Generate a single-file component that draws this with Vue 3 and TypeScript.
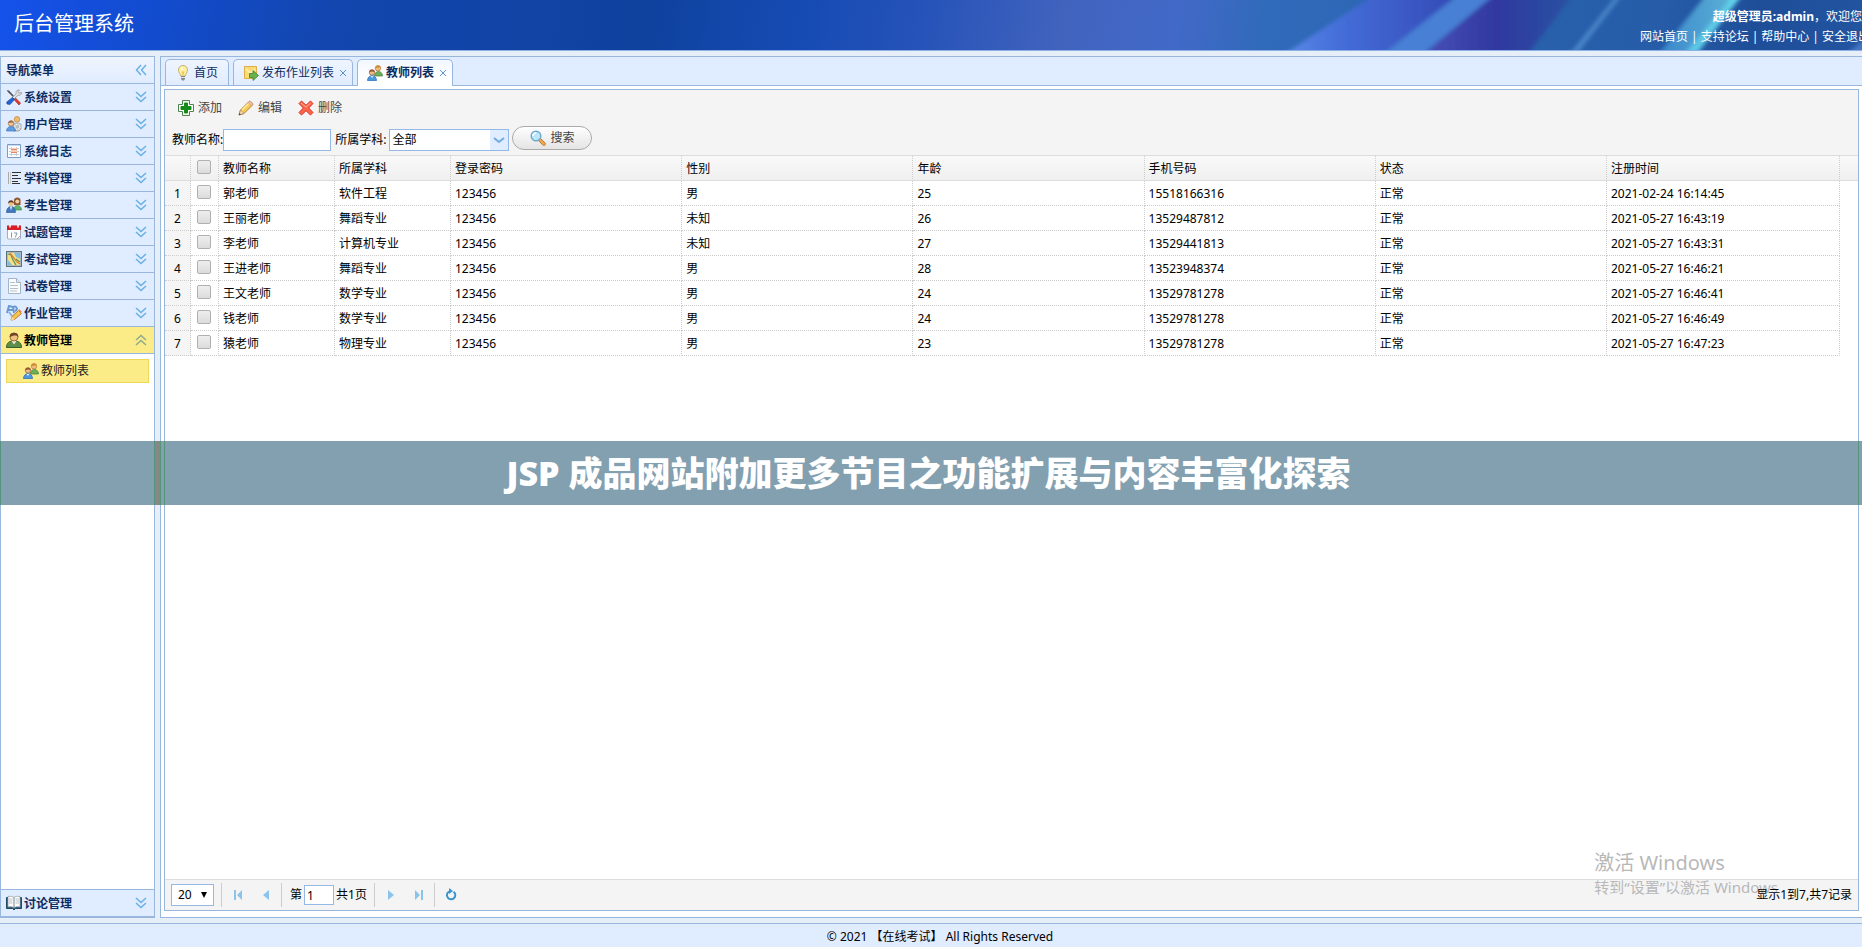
<script setup lang="ts">
import { ref } from 'vue'

interface NavItem { label: string; icon: string }
interface Teacher { name: string; subject: string; password: string; gender: string; age: number; phone: string; status: string; created: string }

const navItems: NavItem[] = [
  { label: '系统设置', icon: 'tools' },
  { label: '用户管理', icon: 'users-gear' },
  { label: '系统日志', icon: 'log' },
  { label: '学科管理', icon: 'lines' },
  { label: '考生管理', icon: 'students' },
  { label: '试题管理', icon: 'calendar' },
  { label: '考试管理', icon: 'exam' },
  { label: '试卷管理', icon: 'paper' },
  { label: '作业管理', icon: 'homework' },
]

const headerLinks = ['网站首页', '支持论坛', '帮助中心', '安全退出']
const columns = ['教师名称', '所属学科', '登录密码', '性别', '年龄', '手机号码', '状态', '注册时间']

const teachers: Teacher[] = [
  { name: '郭老师', subject: '软件工程', password: '123456', gender: '男', age: 25, phone: '15518166316', status: '正常', created: '2021-02-24 16:14:45' },
  { name: '王丽老师', subject: '舞蹈专业', password: '123456', gender: '未知', age: 26, phone: '13529487812', status: '正常', created: '2021-05-27 16:43:19' },
  { name: '李老师', subject: '计算机专业', password: '123456', gender: '未知', age: 27, phone: '13529441813', status: '正常', created: '2021-05-27 16:43:31' },
  { name: '王进老师', subject: '舞蹈专业', password: '123456', gender: '男', age: 28, phone: '13523948374', status: '正常', created: '2021-05-27 16:46:21' },
  { name: '王文老师', subject: '数学专业', password: '123456', gender: '男', age: 24, phone: '13529781278', status: '正常', created: '2021-05-27 16:46:41' },
  { name: '钱老师', subject: '数学专业', password: '123456', gender: '男', age: 24, phone: '13529781278', status: '正常', created: '2021-05-27 16:46:49' },
  { name: '猿老师', subject: '物理专业', password: '123456', gender: '男', age: 23, phone: '13529781278', status: '正常', created: '2021-05-27 16:47:23' },
]

const nameFilter = ref('')
const subjectFilter = ref('全部')
const pageSize = ref('20')
const pageNumber = ref('1')
const selected = ref<number[]>([])

function toggleAll(event: Event) {
  selected.value = (event.target as HTMLInputElement).checked ? teachers.map((_, i) => i) : []
}
</script>

<template>
  <div class="page">
    <svg class="sprite" aria-hidden="true">
      <symbol id="down" viewBox="0 0 16 16"><path d="M3 3l5 4.500 5-4.500M3 8l5 4.500L13 8" fill="none" stroke="#69b0e4" stroke-width="1.500" /></symbol>
      <symbol id="up" viewBox="0 0 16 16"><path d="M3 8l5-4.500L13 8M3 13l5-4.500 5 4.500" fill="none" stroke="#8fa98c" stroke-width="1.500" /></symbol>
      <symbol id="left" viewBox="0 0 16 16"><path d="M8 3L3.500 8 8 13M13 3L8.500 8l4.500 5" fill="none" stroke="#69b0e4" stroke-width="1.500" /></symbol>
      <symbol id="tools" viewBox="0 0 16 16">
        <path d="M1 1l2 .6 6 6.400-1 1L1.600 2.800z" fill="#555" />
        <path d="M9 8.500l5.500 5.500-1.500 2L7.500 10z" fill="#e03b2e" stroke="#9a1f18" stroke-width=".6" />
        <path d="M10 3.500C10 1.500 12 .5 13.500 1L12 2.700l1 1.400 2.500-.6c0 2.300-1.800 3.200-3.500 2.700L8 10 6.300 8.300l4-3.600z" fill="#e3e3e3" stroke="#8a8a8a" stroke-width=".7" />
        <path d="M6.500 8.500l2 2L4 15.500 1 15l-.3-2z" fill="#2463d8" stroke="#153f94" stroke-width=".6" />
      </symbol>
      <symbol id="users-gear" viewBox="0 0 16 16">
        <circle cx="11" cy="3.300" r="2.800" fill="#eebc68" stroke="#b6792b" stroke-width=".6" />
        <path d="M7 15V8.500C8 6.500 14 6.500 15 8.500V13l-2 2z" fill="#b8bec0" stroke="#82898c" stroke-width=".6" />
        <circle cx="11.500" cy="10.800" r="2.600" fill="none" stroke="#eef0f1" stroke-width="1.600" stroke-dasharray="1.300 .7" />
        <circle cx="5" cy="7.500" r="2.700" fill="#f1c59a" stroke="#9b5e31" stroke-width=".6" /><path d="M2.300 7C2 4 8 3.500 7.700 7 6 5.700 4 7 2.300 7z" fill="#a46b37" />
        <path d="M.5 15c0-6 9-6 9 0z" fill="#5f9fdf" stroke="#2f6ab2" stroke-width=".6" />
      </symbol>
      <symbol id="log" viewBox="0 0 16 16">
        <path d="M1.500 1.500h13v13h-13z" fill="#fff" stroke="#7e9cc2" />
        <path d="M2 2.500h12" stroke="#c9dbf2" /><path d="M3 5.500h10M3 8.500h10M3 11.500h10M5.500 4v9M10.500 4v9" stroke="#c3d0da" />
        <path d="M5 5h6v5H5z" fill="#f6cdb6" /><path d="M5 6.500h6M5 9.500h6" stroke="#e58a6c" />
      </symbol>
      <symbol id="lines" viewBox="0 0 16 16"><path d="M2.500 2v12" stroke="#aaa" /><path d="M4.500 2v12" stroke="#ccc" /><path d="M6 2.500h9M6 5.500h6M6 8.500h9M6 11.500h6M6 13.500h8" stroke="#333" /></symbol>
      <symbol id="students" viewBox="0 0 16 16">
        <path d="M8 8V3c0-3.500 6.500-3.500 6.500 0v5z" fill="#8b542b" /><circle cx="11.300" cy="4.500" r="2" fill="#f5caa0" />
        <path d="M7.500 13c0-6 8-6 8 0z" fill="#63b46c" stroke="#36803e" stroke-width=".6" />
        <circle cx="5" cy="6.500" r="2.600" fill="#eec190" /><path d="M2 6.500C2 2 8 2 8 6.500 6 4.700 4 4.700 2 6.500z" fill="#5a3b27" />
        <path d="M.5 15.500c0-8 9-8 9 0z" fill="#3e78bf" stroke="#24538e" stroke-width=".6" /><path d="M4 9.500h2l-1 4z" fill="#fff" />
      </symbol>
      <symbol id="calendar" viewBox="0 0 16 16">
        <rect x="1.500" y="2" width="13" height="13" rx="1" fill="#fff" stroke="#a5adba" /><path d="M1 1.500h14V6H1z" fill="#d91d27" />
        <path d="M4 .5v3M12 .5v3" stroke="#fff" stroke-width="1.500" /><path d="M5.500 8.500v5M8 9h3l-1.700 4.500" fill="none" stroke="#8a96a6" />
        <path d="M11 15l3.500-3.500" stroke="#a5adba" />
      </symbol>
      <symbol id="exam" viewBox="0 0 16 16">
        <rect x=".5" y=".5" width="15" height="15" fill="#a9bbc2" stroke="#60727c" /><rect x="2" y="2" width="12" height="12" fill="#f7df84" />
        <path d="M8 2h6v6L10 6zM2 9l4 5H2z" fill="#82bce2" /><path d="M2 3l3 1 2 5 3 5M14 11l-4-3" fill="none" stroke="#57945b" stroke-width="1.200" />
        <path d="M4 2l7 9 3 2" fill="none" stroke="#d88330" stroke-width="1.300" />
      </symbol>
      <symbol id="paper" viewBox="0 0 16 16"><path d="M2.500.5h8l4 4v11h-12z" fill="#fafcff" stroke="#a4b4c4" /><path d="M10.500.5v4h4" fill="#dce6ee" stroke="#a4b4c4" /><path d="M4 4.500h5M4 7.500h8M4 10.500h8M4 13h7" stroke="#b5bfc6" /></symbol>
      <symbol id="homework" viewBox="0 0 16 16">
        <path d="M1 8L3 1l4 1 1 6M2 5h5M7 2c4-2 5 3 2 4" fill="none" stroke="#6798cf" stroke-width="2" /><path d="M3 7l3 4" stroke="#89b2dd" stroke-width="2" />
        <path d="M5 15l1-3.500 6.500-6 3 3-7 6z" fill="#f4c34d" stroke="#c37b27" /><path d="M5 15l1-3 2.500 2.500z" fill="#ffe3b5" /><path d="M12 5l3 3 .7-1.500-2.200-2.200z" fill="#e6845e" />
      </symbol>
      <symbol id="teacher" viewBox="0 0 16 16"><path d="M.5 15.500c0-5 3-6.500 7.500-6.500s7.500 1.500 7.500 6.500z" fill="#5d8d4a" stroke="#39622b" /><path d="M5.500 9h5L8 12.500z" fill="#f6e7d1" /><circle cx="8" cy="5" r="4" fill="#f0c080" stroke="#744923" stroke-width=".7" /><path d="M3.800 5C2.500-.8 13.500-.8 12.200 5 10 2.500 7 3.500 3.800 5z" fill="#704427" /></symbol>
      <symbol id="pair" viewBox="0 0 16 16">
        <circle cx="11" cy="3.300" r="2.700" fill="#f1bd79" stroke="#a96730" stroke-width=".6" /><path d="M8.300 3C8-.5 14-.5 13.700 3 12 2 10 3 8.300 3z" fill="#c98c36" />
        <path d="M7.500 11c0-6 8-6 8 0z" fill="#6eaf5b" stroke="#45833a" stroke-width=".7" />
        <circle cx="5" cy="7.500" r="2.700" fill="#f0bb8b" stroke="#8b4b26" stroke-width=".6" /><path d="M2.200 7.500C1.800 3.500 8.200 3.500 7.800 7.500 6 6 4 6.500 2.200 7.500z" fill="#98562f" />
        <path d="M.5 15.500c0-6.500 9-6.500 9 0z" fill="#4c99e0" stroke="#2768b4" stroke-width=".7" /><path d="M3.500 11h3L5 13z" fill="#e0f0ff" />
      </symbol>
      <symbol id="book" viewBox="0 0 16 16"><path d="M.5 2.500h15v11h-6L8 15l-1.500-1.500h-6z" fill="#315d79" stroke="#1f4861" /><path d="M2 1.500c3-.5 5 0 6 1v10c-2-1-4-1-6-.5zM14 1.500c-3-.5-5 0-6 1v10c2-1 4-1 6-.5z" fill="#fff" stroke="#87999f" stroke-width=".7" /><path d="M3 4h3.500M3 6h3.500M3 8h3.500M9.500 4H13M9.500 6H13M9.500 8H13" stroke="#a5afb3" stroke-width=".8" /></symbol>
      <symbol id="bulb" viewBox="0 0 16 16"><path d="M5.700 11C5.500 9 3.500 7.500 3.500 5c0-6 9-6 9 0 0 2.500-2 4-2.200 6z" fill="#fff0a0" stroke="#bca250" stroke-width=".8" /><path d="M6 3c1-1 2-1 2 0L7 6z" fill="#fff" /><path d="M6.500 6.500h3L8.500 10h-1z" fill="#edc95d" /><path d="M6 11h4v3l-1 1.500H7L6 14z" fill="#8b8b88" /><path d="M6 12.500h4" stroke="#ddd" /></symbol>
      <symbol id="note-go" viewBox="0 0 16 16"><path d="M1.500 1.500h12v9l-3 3h-9z" fill="#fbdc73" stroke="#e0ac4c" /><path d="M3 4l4.500 4L12 4" fill="none" stroke="#fff1b5" stroke-width="1.500" /><path d="M6.500 8.500H10v-3l5.500 5-5.500 5v-3H6.500z" fill="#68b24f" stroke="#3a832f" stroke-width=".8" /></symbol>
      <symbol id="add" viewBox="0 0 16 16"><path d="M4.500.5h7v4h4v7h-4v4h-7v-4h-4v-7h4z" fill="#fff" stroke="#4c844c" /><path d="M6.500 3h3v3.500H13v3H9.500V13h-3V9.500H3v-3h3.500z" fill="#158c19" stroke="#158c19" /></symbol>
      <symbol id="edit" viewBox="0 0 16 16"><path d="M1 15l1.500-5L11 1.500c1-1 4.500 2 3.500 3.500L6 13.500z" fill="#f7ca55" stroke="#b77d29" /><path d="M4 10l7-7" stroke="#fff0a7" stroke-width="1.500" /><path d="M1 15l1.500-5 3.500 3.500z" fill="#f8dfb9" stroke="#9d7a4d" stroke-width=".6" /><path d="M1 15l.6-2 1.400 1.400z" fill="#333" /><path d="M11 1.500c1-1 4.500 2 3.500 3.500l-1 .8-3.500-3.300z" fill="#efc1b1" stroke="#b98374" stroke-width=".5" /></symbol>
      <symbol id="delete" viewBox="0 0 16 16"><path d="M1 3.500L3.500 1 8 5.300 12.500 1 15 3.500 10.700 8l4.300 4.500-2.500 2.500L8 10.700 3.500 15 1 12.500 5.300 8z" fill="#ff6549" stroke="#d63325" /><path d="M3 3l5 4 4.500-4" fill="none" stroke="#ffae9b" /></symbol>
      <symbol id="search" viewBox="0 0 16 16"><path d="M9 9l5 5" stroke="#bd6e25" stroke-width="3.500" stroke-linecap="round" /><path d="M10 10l4 4" stroke="#efad52" stroke-width="2" stroke-linecap="round" /><circle cx="6" cy="6" r="4.800" fill="#bde6fb" stroke="#70a7cc" stroke-width="1.400" /><path d="M3 6c0-2 1.500-3 3-3" fill="none" stroke="#fff" stroke-width="1.400" /></symbol>
      <symbol id="first" viewBox="0 0 16 16"><path d="M4 3h2v10H4zM12 3v10L7 8z" fill="#8bc4ea" /></symbol>
      <symbol id="prev" viewBox="0 0 16 16"><path d="M11 3v10L5 8z" fill="#8bc4ea" /></symbol>
      <symbol id="next" viewBox="0 0 16 16"><path d="M5 3v10l6-5z" fill="#8bc4ea" /></symbol>
      <symbol id="last" viewBox="0 0 16 16"><path d="M10 3h2v10h-2zM4 3v10l5-5z" fill="#8bc4ea" /></symbol>
      <symbol id="refresh" viewBox="0 0 16 16"><path d="M10.500 4.700A4.200 4.200 0 1 1 6 4.500" fill="none" stroke="#3c94cf" stroke-width="2" /><path d="M6 1v6l4-3z" fill="#3c94cf" /></symbol>
    </svg>

    <header class="banner">
      <svg class="streaks" viewBox="0 0 1862 50" preserveAspectRatio="none" aria-hidden="true">
        <defs>
          <linearGradient id="g-blue"><stop offset="0" stop-color="#5b8ae8" /><stop offset=".3" stop-color="#456fda" /><stop offset="1" stop-color="#3348b4" /></linearGradient>
          <linearGradient id="g-purple"><stop offset="0" stop-color="#4a50b8" /><stop offset=".5" stop-color="#3038a0" /><stop offset="1" stop-color="#2852a2" /></linearGradient>
          <linearGradient id="g-teal"><stop offset="0" stop-color="#3b86cc" /><stop offset=".8" stop-color="#57acd4" /><stop offset="1" stop-color="#62e2f4" /></linearGradient>
          <filter id="soft" x="-5%" y="-20%" width="110%" height="140%"><feGaussianBlur stdDeviation="2" /></filter>
        </defs>
        <g filter="url(#soft)">
          <path d="M1283 55L1374-5h86l-76 60z" fill="url(#g-blue)" />
          <path d="M1382 55l76-60h36l-72 60z" fill="#4680d4" />
          <path d="M1422 55l72-60h79l-46 60z" fill="url(#g-purple)" />
          <path d="M1569 55l48-60h5l-46 60z" fill="#4b88c9" />
          <path d="M1658 55l48-60h36l-46 60z" fill="url(#g-teal)" />
          <path d="M1684 55l50-60h8l-46 60z" fill="#64dcef" opacity=".7" />
          <path d="M1845 55l22-18v18z" fill="#4777c2" />
        </g>
      </svg>
      <h1>后台管理系统</h1>
      <div class="account">
        <p class="welcome"><strong>超级管理员:admin</strong>，欢迎您</p>
        <nav class="links">
          <template v-for="(link, i) in headerLinks" :key="link"><span v-if="i">|</span><a href="#">{{ link }}</a></template>
        </nav>
      </div>
    </header>

    <div class="body">
      <aside class="sidebar">
        <div class="side-title"><h2>导航菜单</h2><button type="button" aria-label="折叠菜单"><svg class="icon"><use href="#left" /></svg></button></div>
        <button v-for="item in navItems" :key="item.label" type="button" class="nav-item">
          <svg class="icon"><use :href="'#' + item.icon" /></svg><span>{{ item.label }}</span><svg class="icon"><use href="#down" /></svg>
        </button>
        <button type="button" class="nav-item active"><svg class="icon"><use href="#teacher" /></svg><span>教师管理</span><svg class="icon"><use href="#up" /></svg></button>
        <div class="subnav"><a href="#"><svg class="icon"><use href="#pair" /></svg>教师列表</a></div>
        <button type="button" class="nav-item last"><svg class="icon"><use href="#book" /></svg><span>讨论管理</span><svg class="icon"><use href="#down" /></svg></button>
      </aside>

      <main class="center">
        <div class="tabs">
          <div class="tab"><button type="button"><svg class="icon"><use href="#bulb" /></svg>首页</button></div>
          <div class="tab closable"><button type="button"><svg class="icon"><use href="#note-go" /></svg>发布作业列表</button><button type="button" class="close" aria-label="关闭发布作业列表"><svg viewBox="0 0 8 8"><path d="M1 1l6 6M7 1L1 7" /></svg></button></div>
          <div class="tab closable current"><button type="button"><svg class="icon"><use href="#pair" /></svg>教师列表</button><button type="button" class="close" aria-label="关闭教师列表"><svg viewBox="0 0 8 8"><path d="M1 1l6 6M7 1L1 7" /></svg></button></div>
        </div>

        <div class="content">
          <section class="panel">
            <div class="toolbar">
              <div class="actions">
                <button type="button"><svg class="icon"><use href="#add" /></svg>添加</button>
                <button type="button"><svg class="icon"><use href="#edit" /></svg>编辑</button>
                <button type="button"><svg class="icon"><use href="#delete" /></svg>删除</button>
              </div>
              <form class="filters" @submit.prevent>
                <label for="teacher-name">教师名称:</label>
                <input id="teacher-name" v-model="nameFilter" type="text">
                <label for="subject" class="subject-label">所属学科:</label>
                <div class="combo">
                  <select id="subject" v-model="subjectFilter"><option>全部</option></select>
                  <svg viewBox="0 0 18 20" aria-hidden="true"><path d="M4 8l5 4 5-4" /></svg>
                </div>
                <button type="submit" class="search"><svg class="icon"><use href="#search" /></svg>搜索</button>
              </form>
            </div>

            <div class="grid">
              <table>
                <colgroup><col class="c-num"><col class="c-check"><col class="c-short"><col class="c-short"><col v-for="n in 5" :key="n"><col class="c-date"><col class="c-end"></colgroup>
                <thead>
                  <tr>
                    <th></th>
                    <th class="check"><input type="checkbox" aria-label="全选" :checked="selected.length === teachers.length" @change="toggleAll"></th>
                    <th v-for="col in columns" :key="col">{{ col }}</th>
                    <th class="end"></th>
                  </tr>
                </thead>
                <tbody>
                  <tr v-for="(t, i) in teachers" :key="i">
                    <td class="num">{{ i + 1 }}</td>
                    <td class="check"><input v-model="selected" type="checkbox" :value="i" :aria-label="'选择' + t.name"></td>
                    <td>{{ t.name }}</td><td>{{ t.subject }}</td><td>{{ t.password }}</td><td>{{ t.gender }}</td><td>{{ t.age }}</td><td>{{ t.phone }}</td><td>{{ t.status }}</td><td>{{ t.created }}</td>
                    <td class="end"></td>
                  </tr>
                </tbody>
              </table>
            </div>

            <div class="pager">
              <div class="size">
                <select v-model="pageSize" aria-label="每页条数"><option>20</option></select>
                <svg viewBox="0 0 8 8" aria-hidden="true"><path d="M1 1h6L4 7z" /></svg>
              </div>
              <i></i>
              <button type="button" aria-label="首页"><svg class="icon"><use href="#first" /></svg></button>
              <button type="button" aria-label="上一页"><svg class="icon"><use href="#prev" /></svg></button>
              <i></i>
              <label for="page-number">第</label>
              <input id="page-number" v-model="pageNumber" type="text">
              <span class="total">共1页</span>
              <i></i>
              <button type="button" aria-label="下一页"><svg class="icon"><use href="#next" /></svg></button>
              <button type="button" aria-label="末页"><svg class="icon"><use href="#last" /></svg></button>
              <i></i>
              <button type="button" aria-label="刷新"><svg class="icon"><use href="#refresh" /></svg></button>
              <span class="summary">显示1到7,共7记录</span>
            </div>
          </section>
        </div>
      </main>
    </div>

    <footer>© 2021 【在线考试】 All Rights Reserved</footer>

    <div class="headline">JSP 成品网站附加更多节目之功能扩展与内容丰富化探索</div>
    <div class="activation"><p>激活 Windows</p><p>转到“设置”以激活 Windows</p></div>
  </div>
</template>

<style>
body { margin: 0; overflow: hidden; }
</style>

<style scoped>
.page {
  --line: #99b7dd;
  position: relative;
  display: flex;
  flex-direction: column;
  height: 100vh;
  overflow: hidden;
  background: #e6eef8;
  color: #000;
  font: 12px/16px "Noto Sans", "Noto Sans CJK SC", sans-serif;
}
.page *, .page *::before { box-sizing: border-box; }
.sprite { position: absolute; width: 0; height: 0; }
.icon { display: block; flex: none; width: 16px; height: 16px; }
button, input, select { margin: 0; font: inherit; color: inherit; }
button { padding: 0; border: 0; background: none; cursor: pointer; }
h1, h2, p { margin: 0; font: inherit; }
a { color: inherit; text-decoration: none; }

.banner {
  position: relative;
  display: flex;
  flex: none;
  align-items: center;
  justify-content: space-between;
  height: 51px;
  padding-left: 14px;
  overflow: hidden;
  border-bottom: 1px solid #8eb0e4;
  background: linear-gradient(100deg, #1552ea 0, #124bcc 9%, #1346ae 18%, #0f429e 35%, #164bb4 43%, #2452b8 49%, #4163be 57%, #4269c8 63%, #306aba 68%, #2a64ae 78%, #265ca8 89%, #1f4e98 94%, #2254a0 100%);
  color: #fff;
}
.streaks { position: absolute; inset: 0; width: 100%; height: 100%; }
h1 { position: relative; padding-bottom: 2px; font-size: 20px; line-height: 28px; }
.account { position: relative; display: flex; flex-direction: column; align-items: flex-end; gap: 4px; margin-right: -8px; padding-top: 3px; white-space: nowrap; }
.welcome { padding-right: 8px; }
.links { display: flex; gap: 3px; }

.body { display: flex; flex: 1; gap: 5px; min-height: 0; padding: 5px 0; }
.sidebar { display: flex; flex: none; flex-direction: column; width: 155px; border: 1px solid var(--line); background: #fff; color: #0e2d5f; font-weight: bold; }
.side-title { display: flex; flex: none; align-items: center; justify-content: space-between; height: 27px; padding: 0 5px; border-bottom: 1px solid var(--line); background: linear-gradient(#eff5ff, #e0ecff); }
.side-title h2 { padding-top: 1px; font-weight: bold; }
.nav-item { display: flex; flex: none; align-items: center; gap: 2px; width: 100%; height: 27px; padding: 0 5px; border-bottom: 1px solid var(--line); background: #e0ecff; font-weight: bold; text-align: left; }
.nav-item span { flex: 1; padding-top: 1px; }
.nav-item.active { background: #fbec88; color: #000; }
.nav-item.last { height: 28px; border-top: 1px solid var(--line); }
.subnav { flex: 1; min-height: 0; padding: 5px; }
.subnav a { display: flex; align-items: center; gap: 2px; height: 24px; padding-left: 16px; border: 1px solid #eed858; background: #fbec88; color: #222; font-weight: normal; }

.center { display: flex; flex: 1; flex-direction: column; min-width: 0; border: 1px solid var(--line); border-right: 0; background: #fff; }
.tabs { display: flex; flex: none; gap: 4px; height: 29px; padding: 2px 4px 0; border-bottom: 1px solid var(--line); background: #e0ecff; color: #0e2d5f; }
.tab { display: flex; align-items: center; height: 26px; padding: 0 10px 0 9px; border: 1px solid var(--line); border-bottom: 0; border-radius: 5px 5px 0 0; background: linear-gradient(#eff5ff, #e0ecff); }
.tab button { display: flex; align-items: center; gap: 3px; }
.tab.closable { padding-right: 5px; }
.tab .close { margin-left: 5px; }
.close svg { width: 8px; height: 8px; fill: none; stroke: #5d94cc; stroke-width: 1; }
.tab.current { height: 27px; background: linear-gradient(#f3f8ff, #fff 80%); }
.tab.current button { font-weight: bold; }

.content { display: flex; flex: 1; min-height: 0; padding: 3px 3px 6px; }
.panel { display: flex; flex: 1; flex-direction: column; min-width: 0; border: 1px solid var(--line); }
.toolbar { flex: none; border-bottom: 1px solid #ddd; background: #f4f4f4; }
.actions { display: flex; align-items: center; gap: 16px; height: 34px; padding: 1px 0 0 13px; color: #444; }
.actions button { display: flex; align-items: center; gap: 4px; }
.filters { display: flex; align-items: center; height: 31px; padding-left: 7px; }
.filters input { width: 108px; height: 22px; border: 1px solid #95b8e7; background: #fff; }
.subject-label { margin: 0 3px 0 4px; }
.combo { position: relative; }
.combo select { display: block; width: 120px; height: 22px; padding: 0 2px; border: 1px solid #95b8e7; border-radius: 0; appearance: none; background: #fff; }
.combo svg { position: absolute; top: 1px; right: 1px; width: 18px; height: 20px; background: #e0ecff; fill: none; stroke: #70acdf; stroke-width: 2; pointer-events: none; }
.search { display: flex; align-items: center; justify-content: center; gap: 4px; width: 80px; height: 24px; margin: 0 0 4px 3px; border: 1px solid #aaa; border-radius: 12px; background: linear-gradient(#fff, #e4e4e4); color: #444; }

.grid { flex: 1; min-height: 0; background: #fff; }
table { width: 100%; border-collapse: separate; border-spacing: 0; table-layout: fixed; }
.c-num { width: 26px; }
.c-check { width: 28px; }
.c-short { width: 116px; }
.c-date { width: 233px; }
.c-end { width: 18px; }
th, td { height: 25px; padding: 2px 4px 0; overflow: hidden; border-right: 1px dotted #ccc; border-bottom: 1px dotted #ccc; font-weight: normal; text-align: left; white-space: nowrap; }
thead tr { background: linear-gradient(#f9f9f9, #efefef); }
th { border-bottom: 1px solid #ddd; }
.num { padding: 2px 0 0; background: #f5f5f5; text-align: center; }
.check { padding: 0 6px; }
.end { border-right: 0; }
td.end { border-bottom: 0; }
.check input { display: block; width: 14px; height: 14px; margin-bottom: 2px; border: 1px solid #b0b0b0; border-radius: 2px; appearance: none; background: linear-gradient(#eee, #dcdcdc); }
.check input:checked { background: #5d94cc; }

.pager { display: flex; flex: none; align-items: center; height: 31px; padding: 0 6px; border-top: 1px solid #ddd; background: #f4f4f4; }
.pager i { width: 1px; height: 24px; margin: 0 2px 0 1px; background: #ccc; }
.pager button { margin: 0 6px; }
.pager label { margin-left: 6px; }
.size { position: relative; margin-right: 6px; }
.size select { display: block; width: 43px; height: 22px; padding: 0 6px; border: 1px solid #95b8e7; border-radius: 0; appearance: none; background: #fff; }
.size svg { position: absolute; top: 7px; right: 6px; width: 8px; height: 8px; pointer-events: none; }
.pager input { width: 30px; height: 20px; margin: 0 2px; padding: 0 2px; border: 1px solid #95b8e7; background: #fff; }
.total { margin-right: 6px; }
.summary { position: relative; z-index: 3; margin-left: auto; }

footer { flex: none; height: 24px; padding: 4px 0 0 18px; border-top: 1px solid var(--line); background: #e0ecff; line-height: 18px; text-align: center; }

.headline {
  position: absolute;
  top: 441px;
  right: 0;
  left: 0;
  z-index: 2;
  height: 64px;
  padding-right: 5px;
  background: linear-gradient(90deg, #56947c 1px, #83a0b0 1px 154px, #56947c 154px 155px, #858885 155px 160px, #56947c 160px 161px, #83a0b0 161px 164px, #56947c 164px 165px, #83a0b0 165px calc(100% - 4px), #56947c calc(100% - 4px) calc(100% - 3px), #83a0b0 calc(100% - 3px));
  color: #fff;
  font: 900 34px/64px "Noto Sans CJK SC", "Noto Sans", sans-serif;
  font-family: "Noto Sans", "Noto Sans CJK SC", sans-serif;
  text-align: center;
}
.activation { position: absolute; right: 84px; bottom: 50px; z-index: 2; color: #b8b8b8; font-size: 15px; line-height: 20px; pointer-events: none; }
.activation p:first-child { font-size: 20px; line-height: 28px; }
</style>
